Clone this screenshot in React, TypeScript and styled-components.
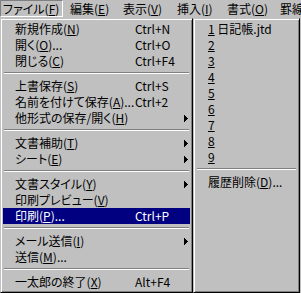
import React from "react";
import styled, { createGlobalStyle } from "styled-components";

const Global = createGlobalStyle`
  html, body { margin: 0; padding: 0; background: #c0c0c0; overflow: hidden; }
  body {
    font-family: "Noto Sans CJK JP", "Liberation Sans", sans-serif;
    font-size: 12px;
    color: #000;
    font-feature-settings: "palt";
  }
`;

const Screen = styled.div`
  width: 301px;
  height: 293px;
  display: flex;
  flex-direction: column;
  background: #c0c0c0;
  overflow: hidden;
`;

const MenuBar = styled.div`
  display: flex;
  height: 18px;
  align-items: flex-start;
  white-space: nowrap;
`;

const BarItem = styled.div<{ $w?: number; $pressed?: boolean }>`
  box-sizing: border-box;
  flex: none;
  height: 17px;
  line-height: ${(p) => (p.$pressed ? 15 : 17)}px;
  width: ${(p) => (p.$w ? `${p.$w}px` : "auto")};
  padding-left: ${(p) => (p.$pressed ? 2 : 7)}px;
  ${(p) =>
    p.$pressed
      ? `border: 1px solid; border-color: #808080 #ffffff #ffffff #808080;`
      : ``}
`;

const Key = styled.span`
  text-decoration: underline;
  text-underline-offset: 1px;
`;

const Panels = styled.div`
  display: flex;
  flex: 1;
  align-items: stretch;
`;

const Menu = styled.div<{ $w: number }>`
  box-sizing: border-box;
  width: ${(p) => p.$w}px;
  flex: none;
  padding: 2px;
  border: 1px solid;
  border-color: #c0c0c0 #000000 #000000 #c0c0c0;
  box-shadow: inset 1px 1px 0 #ffffff, inset -1px -1px 0 #808080;
  display: flex;
  flex-direction: column;
`;

const Item = styled.div<{ $active?: boolean }>`
  display: grid;
  grid-template-columns: 120px 49px 4px;
  align-items: center;
  height: 16px;
  line-height: 16px;
  padding-left: 12px;
  white-space: nowrap;
  background: ${(p) => (p.$active ? "#000080" : "transparent")};
  color: ${(p) => (p.$active ? "#ffffff" : "#000000")};
`;

const SubItem = styled.div`
  height: 16px;
  line-height: 16px;
  padding-left: 12px;
  white-space: nowrap;
`;

const Sep = styled.div`
  height: 9px;
  box-sizing: border-box;
  padding: 3px 1px 0;
  &::before {
    content: "";
    display: block;
    border-top: 1px solid #808080;
    border-bottom: 1px solid #ffffff;
  }
`;

const Arrow = () => (
  <svg width="4" height="7" viewBox="0 0 4 7" shapeRendering="crispEdges">
    <path d="M0 0h1v7H0z M1 1h1v5H1z M2 2h1v3H2z M3 3h1v1H3z" fill="currentColor" />
  </svg>
);

type Entry =
  | { sep: true }
  | { label: React.ReactNode; shortcut?: string; sub?: boolean; active?: boolean };

const L = (text: string, key: string, tail = "") => (
  <span>
    {text}(<Key>{key}</Key>){tail}
  </span>
);

const mainEntries: Entry[] = [
  { label: L("新規作成", "N"), shortcut: "Ctrl+N" },
  { label: L("開く", "O", "..."), shortcut: "Ctrl+O" },
  { label: L("閉じる", "C"), shortcut: "Ctrl+F4" },
  { sep: true },
  { label: L("上書保存", "S"), shortcut: "Ctrl+S" },
  { label: L("名前を付けて保存", "A", "..."), shortcut: "Ctrl+2" },
  { label: L("他形式の保存/開く", "H"), sub: true },
  { sep: true },
  { label: L("文書補助", "T"), sub: true },
  { label: L("シート", "E"), sub: true },
  { sep: true },
  { label: L("文書スタイル", "Y"), sub: true },
  { label: L("印刷プレビュー", "V") },
  { label: L("印刷", "P", "..."), shortcut: "Ctrl+P", active: true },
  { sep: true },
  { label: L("メール送信", "I"), sub: true },
  { label: L("送信", "M", "...") },
  { sep: true },
  { label: L("一太郎の終了", "X"), shortcut: "Alt+F4" },
];

const barItems: { text: string; key: string; w?: number; pressed?: boolean }[] = [
  { text: "ファイル", key: "F", w: 63, pressed: true },
  { text: "編集", key: "E", w: 53 },
  { text: "表示", key: "V", w: 54 },
  { text: "挿入", key: "I", w: 50 },
  { text: "書式", key: "O", w: 53 },
  { text: "罫線", key: "R" },
];

export default function App() {
  return (
    <>
      <Global />
      <Screen>
        <MenuBar>
          {barItems.map((b) => (
            <BarItem key={b.text} $w={b.w} $pressed={b.pressed}>
              {b.text}(<Key>{b.key}</Key>)
            </BarItem>
          ))}
        </MenuBar>
        <Panels>
          <Menu $w={193}>
            {mainEntries.map((e, i) =>
              "sep" in e ? (
                <Sep key={i} />
              ) : (
                <Item key={i} $active={e.active}>
                  {e.label}
                  <span>{e.shortcut ?? ""}</span>
                  {e.sub ? <Arrow /> : <span />}
                </Item>
              )
            )}
          </Menu>
          <Menu $w={107}>
            <SubItem>
              <Key>1</Key> 日記帳.jtd
            </SubItem>
            {[2, 3, 4, 5, 6, 7, 8, 9].map((n) => (
              <SubItem key={n}>
                <Key>{n}</Key>
              </SubItem>
            ))}
            <Sep />
            <SubItem>
              履歴削除(<Key>D</Key>)...
            </SubItem>
          </Menu>
        </Panels>
      </Screen>
    </>
  );
}
